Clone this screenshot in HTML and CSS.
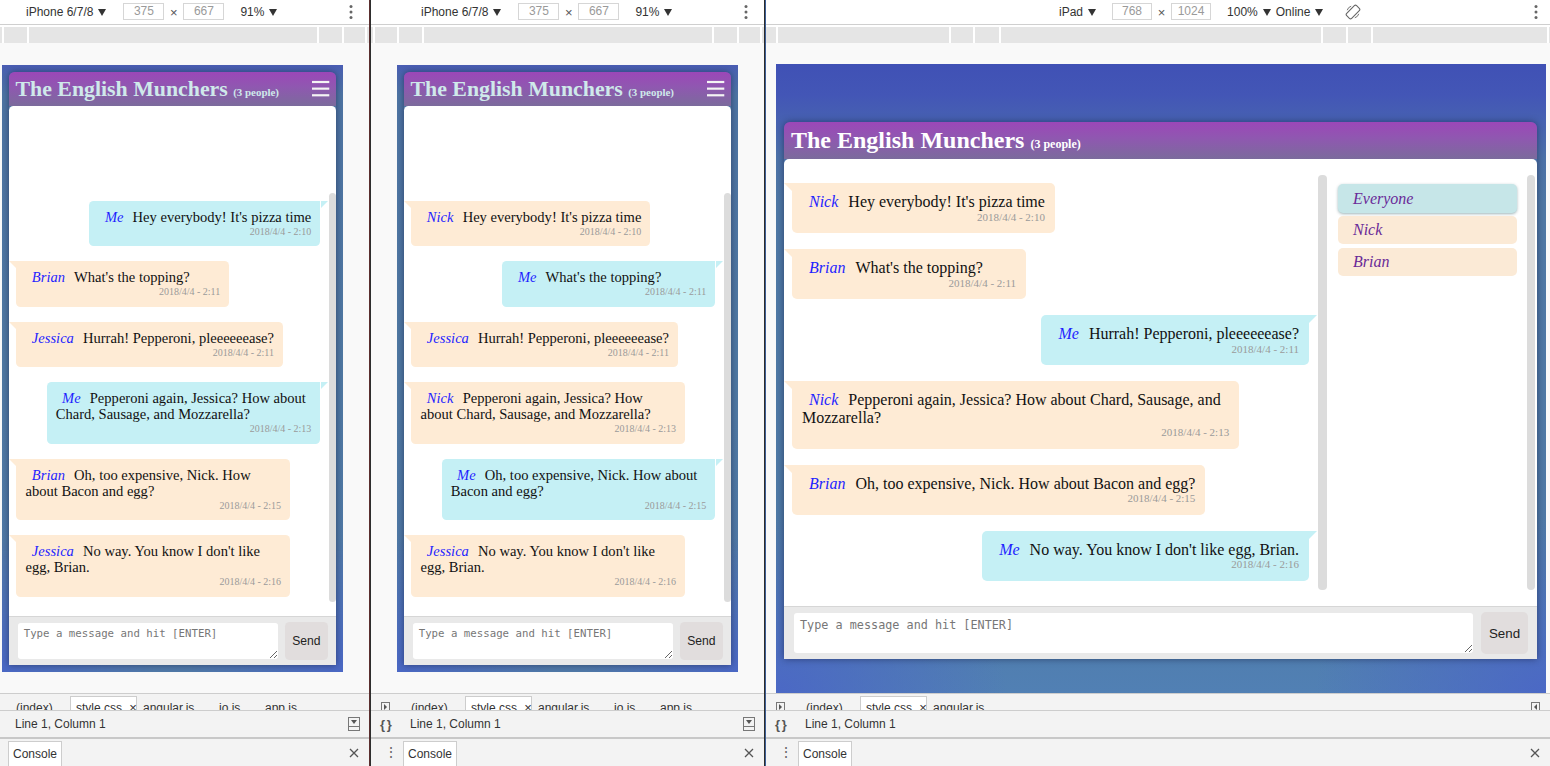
FILE: index.html
```html
<!DOCTYPE html>
<html lang="en">
<head>
<meta charset="utf-8">
<title>The English Munchers – device preview</title>
<link rel="stylesheet" href="styles.css">
</head>
<body>
<div class="screen">

  <!-- ============ PANE 1 (phone, partially off-screen) ============ -->
  <section class="pane pane-phone pane-offset">
    <div class="tb-area">
      <div class="tb tb-phone">
        <span class="tb-label">iPhone 6/7/8</span><span class="caret"></span>
        <span class="tb-box tb-box-first">375</span><span class="tb-x">×</span><span class="tb-box">667</span>
        <span class="tb-label tb-zoom">91%</span><span class="caret"></span>
        <svg class="kebab" width="4" height="16" viewBox="0 0 4 16"><circle cx="2" cy="2.5" r="1.5"/><circle cx="2" cy="8" r="1.5"/><circle cx="2" cy="13.5" r="1.5"/></svg>
      </div>
      <div class="ruler ruler-phone"><i></i><i></i><i></i><i></i><i></i><i></i><i></i></div>
    </div>
    <div class="viewport">
      <div class="device device-phone">
        <div class="chat">
          <header class="chat-head">
            <h1 class="chat-title title-pale">The English Munchers <small>(3 people)</small></h1>
            <svg class="burger" width="19" height="19" viewBox="0 0 19 19"><rect x="0" y="1" width="19" height="2.4"/><rect x="0" y="8.3" width="19" height="2.4"/><rect x="0" y="15.6" width="19" height="2.4"/></svg>
          </header>
          <div class="chat-body">
            <div class="chat-scroll scroll-phone">
              <div class="msg-list">
                <div class="msg msg-me"><span class="name">Me</span>Hey everybody! It's pizza time<span class="time">2018/4/4 - 2:10</span></div>
                <div class="msg msg-other"><span class="name">Brian</span>What's the topping?<span class="time">2018/4/4 - 2:11</span></div>
                <div class="msg msg-other"><span class="name">Jessica</span>Hurrah! Pepperoni, pleeeeeease?<span class="time">2018/4/4 - 2:11</span></div>
                <div class="msg msg-me"><span class="name">Me</span>Pepperoni again, Jessica? How about Chard, Sausage, and Mozzarella?<span class="time">2018/4/4 - 2:13</span></div>
                <div class="msg msg-other"><span class="name">Brian</span>Oh, too expensive, Nick. How about Bacon and egg?<span class="time">2018/4/4 - 2:15</span></div>
                <div class="msg msg-other"><span class="name">Jessica</span>No way. You know I don't like egg, Brian.<span class="time">2018/4/4 - 2:16</span></div>
              </div>
              <div class="track"></div>
            </div>
          </div>
          <div class="chat-input">
            <textarea class="composer" placeholder="Type a message and hit [ENTER]"></textarea>
            <button class="send">Send</button>
          </div>
        </div>
      </div>
    </div>
    <div class="drawer">
      <div class="drawer-tabs">
        <span class="panel-icon"></span>
        <span class="file f-index">(index)</span>
        <span class="file f-active">style.css <span class="tab-x">×</span></span>
        <span class="file f-angular">angular.js</span>
        <span class="file f-io">io.js</span>
        <span class="file">app.js</span>
      </div>
      <div class="drawer-status">
        <span class="braces">{ }</span>
        <span class="status-text">Line 1, Column 1</span>
        <svg class="status-icon" width="12" height="14" viewBox="0 0 12 14"><rect x="0.5" y="0.5" width="11" height="13" fill="none" stroke="#777"/><path d="M3 3h6l-3 4z" fill="#555"/><path d="M0.5 9.5h11" stroke="#777"/></svg>
      </div>
      <div class="drawer-console">
        <span class="vdots">⋮</span>
        <span class="console-tab">Console</span>
        <svg class="close" width="10" height="10" viewBox="0 0 10 10"><path d="M1 1l8 8M9 1l-8 8" stroke="#555" stroke-width="1.3"/></svg>
      </div>
    </div>
  </section>

  <div class="divider divider-a"></div>

  <!-- ============ PANE 2 (phone) ============ -->
  <section class="pane pane-phone">
    <div class="tb-area">
      <div class="tb tb-phone">
        <span class="tb-label">iPhone 6/7/8</span><span class="caret"></span>
        <span class="tb-box tb-box-first">375</span><span class="tb-x">×</span><span class="tb-box">667</span>
        <span class="tb-label tb-zoom">91%</span><span class="caret"></span>
        <svg class="kebab" width="4" height="16" viewBox="0 0 4 16"><circle cx="2" cy="2.5" r="1.5"/><circle cx="2" cy="8" r="1.5"/><circle cx="2" cy="13.5" r="1.5"/></svg>
      </div>
      <div class="ruler ruler-phone"><i></i><i></i><i></i><i></i><i></i><i></i><i></i></div>
    </div>
    <div class="viewport">
      <div class="device device-phone">
        <div class="chat">
          <header class="chat-head">
            <h1 class="chat-title title-pale">The English Munchers <small>(3 people)</small></h1>
            <svg class="burger" width="19" height="19" viewBox="0 0 19 19"><rect x="0" y="1" width="19" height="2.4"/><rect x="0" y="8.3" width="19" height="2.4"/><rect x="0" y="15.6" width="19" height="2.4"/></svg>
          </header>
          <div class="chat-body">
            <div class="chat-scroll scroll-phone">
              <div class="msg-list">
                <div class="msg msg-other"><span class="name">Nick</span>Hey everybody! It's pizza time<span class="time">2018/4/4 - 2:10</span></div>
                <div class="msg msg-me"><span class="name">Me</span>What's the topping?<span class="time">2018/4/4 - 2:11</span></div>
                <div class="msg msg-other"><span class="name">Jessica</span>Hurrah! Pepperoni, pleeeeeease?<span class="time">2018/4/4 - 2:11</span></div>
                <div class="msg msg-other"><span class="name">Nick</span>Pepperoni again, Jessica? How about Chard, Sausage, and Mozzarella?<span class="time">2018/4/4 - 2:13</span></div>
                <div class="msg msg-me"><span class="name">Me</span>Oh, too expensive, Nick. How about Bacon and egg?<span class="time">2018/4/4 - 2:15</span></div>
                <div class="msg msg-other"><span class="name">Jessica</span>No way. You know I don't like egg, Brian.<span class="time">2018/4/4 - 2:16</span></div>
              </div>
              <div class="track"></div>
            </div>
          </div>
          <div class="chat-input">
            <textarea class="composer" placeholder="Type a message and hit [ENTER]"></textarea>
            <button class="send">Send</button>
          </div>
        </div>
      </div>
    </div>
    <div class="drawer">
      <div class="drawer-tabs">
        <span class="panel-icon"></span>
        <span class="file f-index">(index)</span>
        <span class="file f-active">style.css <span class="tab-x">×</span></span>
        <span class="file f-angular">angular.js</span>
        <span class="file f-io">io.js</span>
        <span class="file">app.js</span>
      </div>
      <div class="drawer-status">
        <span class="braces">{ }</span>
        <span class="status-text">Line 1, Column 1</span>
        <svg class="status-icon" width="12" height="14" viewBox="0 0 12 14"><rect x="0.5" y="0.5" width="11" height="13" fill="none" stroke="#777"/><path d="M3 3h6l-3 4z" fill="#555"/><path d="M0.5 9.5h11" stroke="#777"/></svg>
      </div>
      <div class="drawer-console">
        <span class="vdots">⋮</span>
        <span class="console-tab">Console</span>
        <svg class="close" width="10" height="10" viewBox="0 0 10 10"><path d="M1 1l8 8M9 1l-8 8" stroke="#555" stroke-width="1.3"/></svg>
      </div>
    </div>
  </section>

  <div class="divider divider-b"></div>

  <!-- ============ PANE 3 (tablet) ============ -->
  <section class="pane pane-tablet">
    <div class="tb-area">
      <div class="tb tb-tablet">
        <span class="tb-label">iPad</span><span class="caret"></span>
        <span class="tb-box tb-box-first">768</span><span class="tb-x">×</span><span class="tb-box">1024</span>
        <span class="tb-label tb-zoom">100%</span><span class="caret"></span>
        <span class="tb-label tb-online">Online</span><span class="caret"></span>
        <svg class="rotate" width="16" height="16" viewBox="0 0 16 16"><rect x="4.5" y="1" width="7" height="14" rx="1.6" transform="rotate(45 8 8)" fill="none" stroke="#666" stroke-width="1.1"/><path d="M2.2 6.2a6 6 0 0 1 4-4" fill="none" stroke="#666" stroke-width="0.9"/><path d="M13.8 9.8a6 6 0 0 1-4 4" fill="none" stroke="#666" stroke-width="0.9"/></svg>
        <svg class="kebab" width="4" height="16" viewBox="0 0 4 16"><circle cx="2" cy="2.5" r="1.5"/><circle cx="2" cy="8" r="1.5"/><circle cx="2" cy="13.5" r="1.5"/></svg>
      </div>
      <div class="ruler ruler-tablet"><i></i><i></i><i></i><i></i><i></i><i></i><i></i><i></i><i></i></div>
    </div>
    <div class="viewport viewport-tablet">
      <div class="device device-tablet">
        <div class="chat chat-tablet">
          <header class="chat-head">
            <h1 class="chat-title">The English Munchers <small>(3 people)</small></h1>
          </header>
          <div class="chat-body">
            <div class="chat-scroll scroll-tablet">
              <div class="msg-list list-tablet">
                <div class="msg msg-other"><span class="name">Nick</span>Hey everybody! It's pizza time<span class="time">2018/4/4 - 2:10</span></div>
                <div class="msg msg-other"><span class="name">Brian</span>What's the topping?<span class="time">2018/4/4 - 2:11</span></div>
                <div class="msg msg-me"><span class="name">Me</span>Hurrah! Pepperoni, pleeeeeease?<span class="time">2018/4/4 - 2:11</span></div>
                <div class="msg msg-other"><span class="name">Nick</span>Pepperoni again, Jessica? How about Chard, Sausage, and Mozzarella?<span class="time">2018/4/4 - 2:13</span></div>
                <div class="msg msg-other"><span class="name">Brian</span>Oh, too expensive, Nick. How about Bacon and egg?<span class="time">2018/4/4 - 2:15</span></div>
                <div class="msg msg-me"><span class="name">Me</span>No way. You know I don't like egg, Brian.<span class="time">2018/4/4 - 2:16</span></div>
              </div>
              <div class="track track-msgs"></div>
              <ul class="users">
                <li class="user user-active">Everyone</li>
                <li class="user">Nick</li>
                <li class="user">Brian</li>
              </ul>
              <div class="track"></div>
            </div>
          </div>
          <div class="chat-input">
            <textarea class="composer" placeholder="Type a message and hit [ENTER]"></textarea>
            <button class="send">Send</button>
          </div>
        </div>
      </div>
    </div>
    <div class="drawer">
      <div class="drawer-tabs">
        <span class="panel-icon"></span>
        <span class="file f-index">(index)</span>
        <span class="file f-active">style.css <span class="tab-x">×</span></span>
        <span class="file f-angular">angular.js</span>
        <span class="panel-icon panel-icon-right"></span>
      </div>
      <div class="drawer-status">
        <span class="braces">{ }</span>
        <span class="status-text">Line 1, Column 1</span>
      </div>
      <div class="drawer-console">
        <span class="vdots">⋮</span>
        <span class="console-tab">Console</span>
        <svg class="close" width="10" height="10" viewBox="0 0 10 10"><path d="M1 1l8 8M9 1l-8 8" stroke="#555" stroke-width="1.3"/></svg>
      </div>
    </div>
  </section>

</div>
</body>
</html>
```

FILE: styles.css
```css
* { box-sizing: border-box; }

html, body { margin: 0; padding: 0; }

body {
  width: 1550px;
  height: 766px;
  overflow: hidden;
  background: #f3f3f3;
  font-family: "Liberation Sans", Arial, sans-serif;
  font-size: 12px;
  color: #333;
}

.screen {
  display: flex;
  height: 766px;
}

/* ---------- panes ---------- */
.pane {
  flex: none;
  display: flex;
  flex-direction: column;
  height: 766px;
  overflow: hidden;
  background: #f9f9f9;
}
.pane-phone { width: 393px; }
.pane-offset { margin-left: -24px; }
.pane-tablet { width: 784px; }

.divider { flex: none; width: 2px; height: 766px; }
.divider-a { background: linear-gradient(to right, #5b2f2f 50%, #2e2e2e 50%); }
.divider-b { background: linear-gradient(to right, #2c2c2c 50%, #3d5f96 50%); }

/* ---------- device toolbar ---------- */
.tb-area { flex: none; background: #fff; }

.tb {
  height: 25px;
  display: flex;
  align-items: center;
  border-bottom: 1px solid #cfcfcf;
  white-space: nowrap;
}
.tb-phone { padding-left: 50px; }
.tb-tablet { padding-left: 293px; }

.tb-label { color: #333; }
.caret {
  width: 0; height: 0;
  margin-left: 5px;
  border-left: 4px solid transparent;
  border-right: 4px solid transparent;
  border-top: 7px solid #333;
}
.tb-box {
  width: 41px;
  height: 17px;
  margin-top: -2px;
  border: 1px solid #d6d6d6;
  color: #9a9a9a;
  text-align: center;
  line-height: 15px;
}
.tb-box-first { margin-left: 17px; }
.tb-tablet .tb-box-first { margin-left: 16px; }
.tb-tablet .tb-box { width: 40px; }
.tb-x { width: 9px; margin: 0 5px 0 5px; color: #555; font-size: 13px; text-align: center; }
.tb-zoom { margin-left: 16px; }
.tb-online { margin-left: 5px; }
.rotate { margin-left: 22px; }
.kebab { margin-left: auto; margin-right: 16px; fill: #666; }
.tb-tablet .kebab { margin-right: 12px; }

.ruler {
  display: grid;
  height: 16px;
  margin-top: 2px;
  column-gap: 2px;
  background: #fff;
}
.ruler i { display: block; background: #e5e5e5; }
.ruler-phone { grid-template-columns: 2px 22px 23px 288px 23px 21px 2px; }
.ruler-tablet { grid-template-columns: 10px 171px 22px 24px 320px 23px 23px 174px 1px; }

/* ---------- emulated viewport ---------- */
.viewport {
  flex: 1;
  overflow: hidden;
  padding-top: 22px;
  background: #f9f9f9;
}
.viewport-tablet { padding-top: 21px; }

.device-phone {
  width: 375px;
  height: 667px;
  margin: 0 auto;
  padding: 8px;
  zoom: 0.91;
  background:
    radial-gradient(ellipse 45% 22% at 0% 100%, rgba(74, 102, 200, 0.9), rgba(74, 102, 200, 0)),
    radial-gradient(ellipse 45% 22% at 100% 100%, rgba(74, 102, 200, 0.9), rgba(74, 102, 200, 0)),
    linear-gradient(to bottom, #4a5db4 0%, #4b66ad 1.5%, #4e74a3 5%, #4f78a2 50%, #5079a8 100%);
}
.device-tablet {
  width: 770px;
  height: 630px;
  margin-left: 10px;
  padding: 58px 9px 0 8px;
  background:
    radial-gradient(ellipse 30% 28% at 0% 100%, rgba(74, 100, 200, 0.85), rgba(74, 100, 200, 0)),
    radial-gradient(ellipse 30% 28% at 100% 100%, rgba(74, 100, 200, 0.85), rgba(74, 100, 200, 0)),
    linear-gradient(to bottom, #4051b5 0%, #4356b6 5%, #4864b0 10%, #4d72a8 15%, #4f78a5 22%, #4f7aa6 80%, #5180b4 100%);
}

/* ---------- chat widget ---------- */
.chat {
  display: flex;
  flex-direction: column;
  height: 100%;
  border-radius: 6px 6px 0 0;
  box-shadow: 0 0 7px rgba(20, 25, 60, 0.55);
}
.chat-tablet { height: 537px; }

.chat-head {
  flex: none;
  height: 37px;
  display: flex;
  align-items: center;
  padding: 0 7px;
  border-radius: 6px 6px 0 0;
  background: linear-gradient(to bottom, #9c47b8 0%, #8f58b0 45%, #7b6b9c 100%);
}
.chat-title {
  margin: 0;
  font-family: "Liberation Serif", "Times New Roman", serif;
  font-size: 24px;
  font-weight: bold;
  color: #fff;
  white-space: nowrap;
}
.chat-title small { font-size: 12px; }
.title-pale { color: #cfe9ea; }
.burger { margin-left: auto; fill: #f4f4f4; }

.chat-body {
  flex: 1;
  min-height: 0;
  display: flex;
  flex-direction: column;
  background: #fff;
  border-radius: 5px 5px 0 0;
}

.chat-scroll {
  flex: 1;
  display: flex;
  min-height: 0;
}
.scroll-phone { margin: 96px 0 16px; }
.scroll-tablet { margin: 16px 0; padding-right: 2px; }

.track {
  flex: none;
  width: 8px;
  background: #dcdcdc;
  border-radius: 4px;
}
.track-msgs { width: 9px; }

.msg-list {
  flex: 1;
  min-width: 0;
  display: flex;
  flex-direction: column;
  gap: 16.5px;
  padding: 8px 0;
}
.list-tablet { gap: 16px; }

.msg {
  box-sizing: content-box;
  position: relative;
  align-self: flex-start;
  min-width: 214px;
  max-width: 80%;
  margin-left: 8px;
  padding: 10px;
  border-radius: 5px;
  font-family: "Liberation Serif", "Times New Roman", serif;
  font-size: 16px;
  line-height: 17.5px;
  color: #111;
}
.msg::before {
  content: "";
  position: absolute;
  top: 0;
  width: 0;
  height: 0;
  border-top: 8px solid transparent;
}
.msg-other {
  background: #feebd5;
  border-top-left-radius: 0;
}
.msg-other::before {
  left: -8px;
  border-top-color: #feebd5;
  border-left: 8px solid transparent;
}
.msg-me {
  align-self: flex-end;
  margin-left: 0;
  margin-right: 9px;
  background: #c5f0f5;
  border-top-right-radius: 0;
}
.msg-me::before {
  right: -8px;
  border-top-color: #c5f0f5;
  border-right: 8px solid transparent;
}

.name {
  font-style: italic;
  color: #1f1fff;
  margin: 0 10px 0 7px;
}
.time {
  display: block;
  text-align: right;
  font-size: 11px;
  line-height: 12.6px;
  color: #9a9a9a;
}

.users {
  flex: none;
  width: 200px;
  margin: 0;
  padding: 9px 10px 0 11px;
  list-style: none;
}
.user {
  height: 28px;
  margin-bottom: 4px;
  padding-left: 15px;
  border-radius: 5px;
  background: #fbead6;
  font-family: "Liberation Serif", "Times New Roman", serif;
  font-size: 16px;
  font-style: italic;
  line-height: 28px;
  color: #6a2a98;
}
.user-active {
  height: 29px;
  margin-bottom: 3px;
  line-height: 29px;
  background: #c6e6e8;
  box-shadow: 0 1px 3px rgba(40, 90, 100, 0.45);
}

.chat-input {
  flex: none;
  height: 53px;
  display: flex;
  align-items: center;
  gap: 8px;
  padding: 0 9px 0 10px;
  background: #e9e9e9;
  border-top: 1px solid #d6d6d6;
}
.composer {
  flex: 1;
  height: 40px;
  padding: 5px 6px;
  border: none;
  border-radius: 3px;
  background: #fff;
  font-family: "DejaVu Sans Mono", "Liberation Mono", monospace;
  font-size: 11.8px;
  color: #333;
  resize: vertical;
}
.composer::placeholder { color: #777; }
.send {
  flex: none;
  width: 47px;
  height: 42px;
  border: none;
  border-radius: 5px;
  background: #e1dddd;
  font-family: "Liberation Sans", Arial, sans-serif;
  font-size: 13.33px;
  color: #222;
}

/* ---------- devtools drawer ---------- */
.drawer {
  flex: none;
  height: 73px;
  background: #f3f3f3;
  border-top: 1px solid #cdcdcd;
}

.drawer-tabs {
  height: 17px;
  display: flex;
  align-items: flex-start;
  overflow: hidden;
  border-bottom: 1px solid #cdcdcd;
  white-space: nowrap;
}
.panel-icon {
  flex: none;
  width: 9px;
  height: 12px;
  margin: 8px 0 0 10px;
  border: 1px solid #777;
  position: relative;
}
.panel-icon::after {
  content: "";
  position: absolute;
  left: 2px;
  top: 1px;
  border-top: 3px solid transparent;
  border-bottom: 3px solid transparent;
  border-left: 3px solid #555;
}
.panel-icon-right { margin-left: auto; margin-right: 10px; }
.panel-icon-right::after {
  left: 2px;
  border-left: none;
  border-right: 3px solid #555;
}
.file {
  flex: none;
  padding-top: 7px;
  line-height: 14px;
  color: #333;
}
.f-index { margin-left: 21px; width: 54px; }
.f-active {
  width: 67px;
  margin-top: 2px;
  margin-right: 6px;
  padding: 4px 0 0 5px;
  height: 30px;
  background: #fff;
  border: 1px solid #cdcdcd;
}
.tab-x { margin-left: 4px; font-size: 13px; }
.f-angular { width: 76px; }
.f-io { width: 46px; }

.drawer-status {
  height: 28px;
  display: flex;
  align-items: center;
  border-bottom: 2px solid #c8c8c8;
}
.braces {
  flex: none;
  width: 39px;
  padding-left: 9px;
  font-size: 13px;
  font-weight: bold;
  color: #555;
  letter-spacing: -1px;
}
.status-icon { margin-left: auto; margin-right: 9px; }

.drawer-console {
  height: 27px;
  display: flex;
  align-items: flex-start;
}
.vdots {
  flex: none;
  width: 32px;
  padding: 5px 0 0 13px;
  font-size: 14px;
  color: #666;
}
.console-tab {
  margin-top: 2px;
  height: 30px;
  padding: 5px 4px 0;
  background: #fff;
  border: 1px solid #cdcdcd;
}
.close { margin: 9px 10px 0 auto; }
```
